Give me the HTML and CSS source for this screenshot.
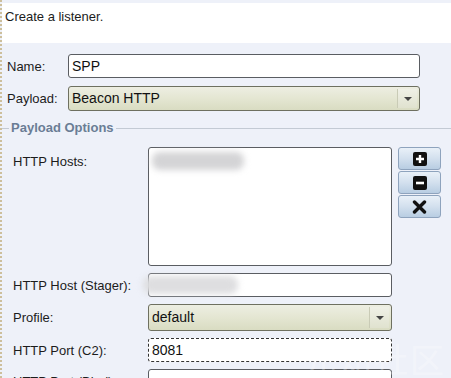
FILE: index.html
```html
<!DOCTYPE html>
<html>
<head>
<meta charset="utf-8">
<link rel="stylesheet" href="styles.css">
</head>
<body>
<div class="frame">
  <div class="header">Create a listener.</div>
  <div class="main">
    <div class="row row-name">
      <label class="lbl">Name:</label>
      <div class="input">SPP</div>
    </div>
    <div class="row row-payload">
      <label class="lbl">Payload:</label>
      <div class="combo"><span class="combo-text">Beacon HTTP</span><span class="combo-btn"><span class="tri"></span></span></div>
    </div>
  </div>
  <div class="legend"><span class="legend-lead"></span><span class="legend-text">Payload Options</span><span class="legend-line"></span></div>
  <div class="options">
    <label class="olbl olbl-top">HTTP Hosts:</label>
    <div class="textarea"><span class="blur blur-hosts"></span></div>
    <div class="btns">
      <div class="btn"><svg width="14" height="14" viewBox="0 0 14 14"><rect x="0" y="0" width="14" height="14" rx="2" fill="#111"/><path d="M7 3v8M3 7h8" stroke="#fff" stroke-width="2.4"/></svg></div>
      <div class="btn"><svg width="14" height="14" viewBox="0 0 14 14"><rect x="0" y="0" width="14" height="14" rx="2" fill="#111"/><path d="M3 7h8" stroke="#fff" stroke-width="2.6"/></svg></div>
      <div class="btn"><svg width="15" height="14" viewBox="0 0 15 14"><path d="M2.5 2l10 10M12.5 2l-10 10" stroke="#111" stroke-width="3.4" stroke-linecap="round"/></svg></div>
    </div>
    <label class="olbl">HTTP Host (Stager):</label>
    <div class="input"><span class="blur blur-stager"></span></div>
    <span></span>
    <label class="olbl">Profile:</label>
    <div class="combo combo-tall"><span class="combo-text">default</span><span class="combo-btn"><span class="tri"></span></span></div>
    <span></span>
    <label class="olbl">HTTP Port (C2):</label>
    <div class="input focused">8081</div>
    <span></span>
    <label class="olbl">HTTP Port (Bind):</label>
    <div class="input"></div>
    <span></span>
  </div>
  <div class="watermark">先知社区</div>
</div>
</body>
</html>
```

FILE: styles.css
```css
html, body {
  margin: 0;
  padding: 0;
  overflow: hidden;
}
body {
  background: #eef1f9;
  font-family: "Liberation Sans", Arial, sans-serif;
  font-size: 13px;
  color: #1c1c1c;
}
.frame {
  position: relative;
  height: 378px;
  border-left: 2px dotted #cdbf9c;
  overflow: hidden;
}
.header {
  margin-top: 3px;
  height: 40px;
  background: #ffffff;
  padding: 6px 0 0 3px;
  box-sizing: border-box;
  line-height: 16px;
}
.main {
  padding: 11px 0 0 5px;
}
.row {
  display: flex;
  align-items: center;
}
.row-name { height: 24px; }
.row-payload { height: 25px; margin-top: 8px; }
.lbl {
  width: 61px;
}
.input {
  position: relative;
  box-sizing: border-box;
  height: 24px;
  background: #fff;
  border: 1px solid #5a5d62;
  border-radius: 3px;
  font-size: 14px;
  line-height: 22px;
  padding-left: 3px;
  color: #111;
}
.row .input { width: 352px; }
.row .combo { width: 352px; }
.input.focused {
  border: 1px dashed #333;
}
.combo {
  box-sizing: border-box;
  height: 25px;
  display: flex;
  border: 1px solid #6e7060;
  border-radius: 3px;
  background: linear-gradient(#edeee2 0%, #e4e6d2 50%, #d9dcc2 100%);
  font-size: 14px;
  color: #111;
}
.combo-tall { height: 27px; }
.combo-text {
  flex: 1;
  padding-left: 3px;
  line-height: 23px;
}
.combo-tall .combo-text { line-height: 25px; }
.combo-btn {
  width: 19px;
  margin: 2px 2px 2px 0;
  border-left: 1px solid #c9cbb6;
  background: linear-gradient(#eff0e6, #e0e2cf);
  display: flex;
  align-items: center;
  justify-content: center;
}
.tri {
  width: 0;
  height: 0;
  border-left: 4px solid transparent;
  border-right: 4px solid transparent;
  border-top: 4px solid #444;
}
.legend {
  display: flex;
  align-items: center;
  margin-top: 9px;
  height: 16px;
}
.legend-lead {
  width: 7px;
  border-top: 1px solid #c3cad4;
}
.legend-text {
  font-weight: bold;
  color: #6a7d95;
  padding: 0 2px;
  line-height: 16px;
}
.legend-line {
  flex: 1;
  border-top: 1px solid #c3cad4;
}
.options {
  display: grid;
  grid-template-columns: 129px 244px 43px;
  column-gap: 6px;
  row-gap: 7px;
  padding: 11px 0 0 11px;
  align-items: center;
}
.olbl { white-space: nowrap; }
.olbl-top { align-self: start; padding-top: 7px; }
.options .input { height: 24px; }
.textarea {
  position: relative;
  box-sizing: border-box;
  height: 119px;
  background: #fff;
  border: 1px solid #5a5d62;
  border-radius: 3px;
}
.btns {
  align-self: start;
  display: flex;
  flex-direction: column;
  gap: 1px;
}
.btn {
  box-sizing: border-box;
  width: 43px;
  height: 23px;
  border: 1px solid #8ea3bd;
  border-radius: 3px;
  background: linear-gradient(#e9f0f8 0%, #d3e0ee 50%, #b8cde2 100%);
  display: flex;
  align-items: center;
  justify-content: center;
}
.blur {
  position: absolute;
  background: #d4d4d6;
  filter: blur(3px);
  border-radius: 8px;
}
.blur-hosts {
  left: 3px;
  top: 4px;
  width: 92px;
  height: 18px;
}
.blur-stager {
  left: -6px;
  top: 2px;
  width: 95px;
  height: 18px;
  background: #dedee0;
}
.watermark {
  position: absolute;
  left: 300px;
  top: 334px;
  font-family: "Noto Sans CJK SC", sans-serif;
  font-size: 34px;
  color: rgba(255, 255, 255, 0.3);
  letter-spacing: 2px;
  pointer-events: none;
}
```
